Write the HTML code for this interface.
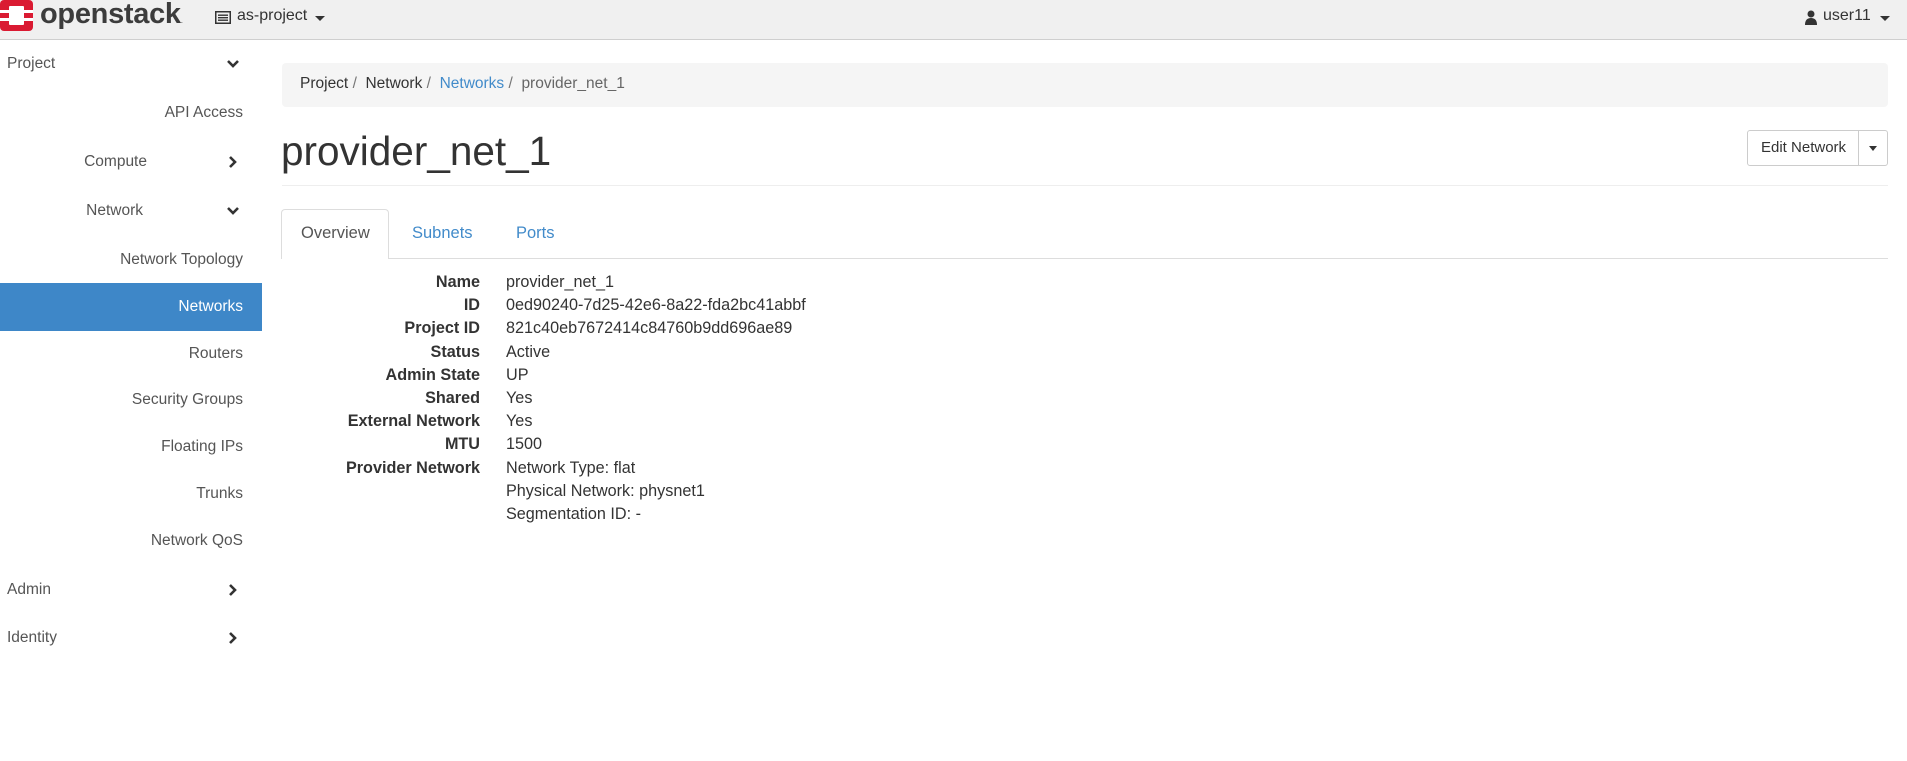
<!DOCTYPE html>
<html><head><meta charset="utf-8"><style>
*{box-sizing:border-box;margin:0;padding:0}
body{width:1907px;height:761px;background:#fff;font-family:"Liberation Sans",Arial,sans-serif;color:#333;position:relative;overflow:hidden;font-size:15px}
.top{position:absolute;left:0;top:0;width:1907px;height:40px;background:#f0f0f0;border-bottom:1px solid #cfcfcf}
.abs{position:absolute;white-space:nowrap}
.side{position:absolute;left:0;top:0;width:262px;height:761px}
.si{position:absolute;right:19px;font-size:15.5px;color:#555;white-space:nowrap;transform:translateY(-50%)}
.chev{position:absolute;left:226px;width:14px;height:14px;transform:translateY(-50%)}
.lbl{position:absolute;right:1427px;font-weight:bold;font-size:16.2px;color:#333;white-space:nowrap}
.val{position:absolute;left:506px;font-size:16.2px;color:#333;white-space:nowrap}
</style></head><body>
<div class="top">
  <svg class="abs" style="left:0;top:0" width="34" height="32" viewBox="0 0 34 32">
    <rect x="0" y="0" width="33" height="31" rx="4" fill="#da1a32"/>
    <rect x="0" y="10" width="33" height="3" fill="#fff"/>
    <rect x="0" y="18" width="33" height="3" fill="#fff"/>
    <rect x="9" y="6" width="15" height="19" rx="1" fill="#fff"/>
  </svg>
  <div class="abs" style="left:40px;top:-2px;font-size:29px;font-weight:bold;color:#3c3c3c;letter-spacing:-0.3px">openstack<span style="font-size:8px;font-weight:normal">.</span></div>
  <svg class="abs" style="left:215px;top:11px" width="16" height="13" viewBox="0 0 16 13"><rect x="0.75" y="0.75" width="14.5" height="11.5" fill="none" stroke="#333" stroke-width="1.5"/><rect x="3" y="3.5" width="10" height="1.4" fill="#333"/><rect x="3" y="6" width="10" height="1.4" fill="#333"/><rect x="3" y="8.5" width="10" height="1.4" fill="#333"/></svg>
  <div class="abs" style="left:237px;top:7px;font-size:16px;color:#333">as-project</div>
  <div class="abs" style="left:315px;top:16px;width:0;height:0;border-left:5px solid transparent;border-right:5px solid transparent;border-top:5px solid #333"></div>
  <svg class="abs" style="left:1805px;top:10px" width="12" height="15" viewBox="0 0 12 15"><circle cx="6" cy="4" r="3.5" fill="#333"/><path d="M0 15 Q0 8 6 8 Q12 8 12 15Z" fill="#333"/></svg>
  <div class="abs" style="left:1823px;top:7px;font-size:16px;color:#333">user11</div>
  <div class="abs" style="left:1880px;top:16px;width:0;height:0;border-left:5px solid transparent;border-right:5px solid transparent;border-top:5px solid #333"></div>
</div>

<div class="side">
<div class="abs" style="left:0;top:283px;width:262px;height:48px;background:#3e87c8"></div>
<div class="si" style="left:7px;right:auto;top:64px">Project</div>
<div class="si" style="top:113px">API Access</div>
<div class="si" style="top:162px;right:115px">Compute</div>
<div class="si" style="top:211px;right:119px">Network</div>
<div class="si" style="top:260px">Network Topology</div>
<div class="si" style="top:307px;color:#fff">Networks</div>
<div class="si" style="top:354px">Routers</div>
<div class="si" style="top:400px">Security Groups</div>
<div class="si" style="top:447px">Floating IPs</div>
<div class="si" style="top:494px">Trunks</div>
<div class="si" style="top:541px">Network QoS</div>
<div class="si" style="left:7px;right:auto;top:590px">Admin</div>
<div class="si" style="left:7px;right:auto;top:638px">Identity</div>
<svg class="chev" style="top:64px" viewBox="0 0 14 14"><path d="M2 4 L7 9 L12 4" fill="none" stroke="#333" stroke-width="2.6"/></svg>
<svg class="chev" style="top:162px" viewBox="0 0 14 14"><path d="M4 2 L9 7 L4 12" fill="none" stroke="#333" stroke-width="2.6"/></svg>
<svg class="chev" style="top:211px" viewBox="0 0 14 14"><path d="M2 4 L7 9 L12 4" fill="none" stroke="#333" stroke-width="2.6"/></svg>
<svg class="chev" style="top:590px" viewBox="0 0 14 14"><path d="M4 2 L9 7 L4 12" fill="none" stroke="#333" stroke-width="2.6"/></svg>
<svg class="chev" style="top:638px" viewBox="0 0 14 14"><path d="M4 2 L9 7 L4 12" fill="none" stroke="#333" stroke-width="2.6"/></svg>
</div>

<div class="abs" style="left:282px;top:63px;width:1606px;height:44px;background:#f5f5f5;border-radius:4px"></div>
<div class="abs" style="left:300px;top:75px;font-size:15.5px;color:#333">Project <span style="color:#777">/</span>&nbsp; Network <span style="color:#777">/</span>&nbsp; <span style="color:#428bca">Networks</span> <span style="color:#777">/</span>&nbsp; <span style="color:#666">provider_net_1</span></div>
<div class="abs" style="left:281px;top:128px;font-size:40.5px;color:#333">provider_net_1</div>
<div class="abs" style="left:1747px;top:130px;width:141px;height:36px;border:1px solid #ccc;border-radius:3px;background:#fff"></div>
<div class="abs" style="left:1858px;top:130px;width:1px;height:36px;background:#ccc"></div>
<div class="abs" style="left:1761px;top:139px;font-size:15px;color:#333">Edit Network</div>
<div class="abs" style="left:1869px;top:146px;width:0;height:0;border-left:4.5px solid transparent;border-right:4.5px solid transparent;border-top:5px solid #333"></div>
<div class="abs" style="left:282px;top:185px;width:1606px;height:1px;background:#eee"></div>

<div class="abs" style="left:282px;top:258px;width:1606px;height:1px;background:#ddd"></div>
<div class="abs" style="left:281px;top:209px;width:108px;height:50px;border:1px solid #ddd;border-bottom:none;border-radius:4px 4px 0 0;background:#fff"></div>
<div class="abs" style="left:301px;top:224px;font-size:16.5px;color:#555">Overview</div>
<div class="abs" style="left:412px;top:224px;font-size:16.5px;color:#428bca">Subnets</div>
<div class="abs" style="left:516px;top:224px;font-size:16.5px;color:#428bca">Ports</div>

<div class="lbl" style="top:273px">Name</div><div class="val" style="top:273px">provider_net_1</div>
<div class="lbl" style="top:296px">ID</div><div class="val" style="top:296px">0ed90240-7d25-42e6-8a22-fda2bc41abbf</div>
<div class="lbl" style="top:319px">Project ID</div><div class="val" style="top:319px">821c40eb7672414c84760b9dd696ae89</div>
<div class="lbl" style="top:343px">Status</div><div class="val" style="top:343px">Active</div>
<div class="lbl" style="top:366px">Admin State</div><div class="val" style="top:366px">UP</div>
<div class="lbl" style="top:389px">Shared</div><div class="val" style="top:389px">Yes</div>
<div class="lbl" style="top:412px">External Network</div><div class="val" style="top:412px">Yes</div>
<div class="lbl" style="top:435px">MTU</div><div class="val" style="top:435px">1500</div>
<div class="lbl" style="top:459px">Provider Network</div><div class="val" style="top:459px">Network Type: flat</div>
<div class="val" style="top:482px">Physical Network: physnet1</div>
<div class="val" style="top:505px">Segmentation ID: -</div>
</body></html>
